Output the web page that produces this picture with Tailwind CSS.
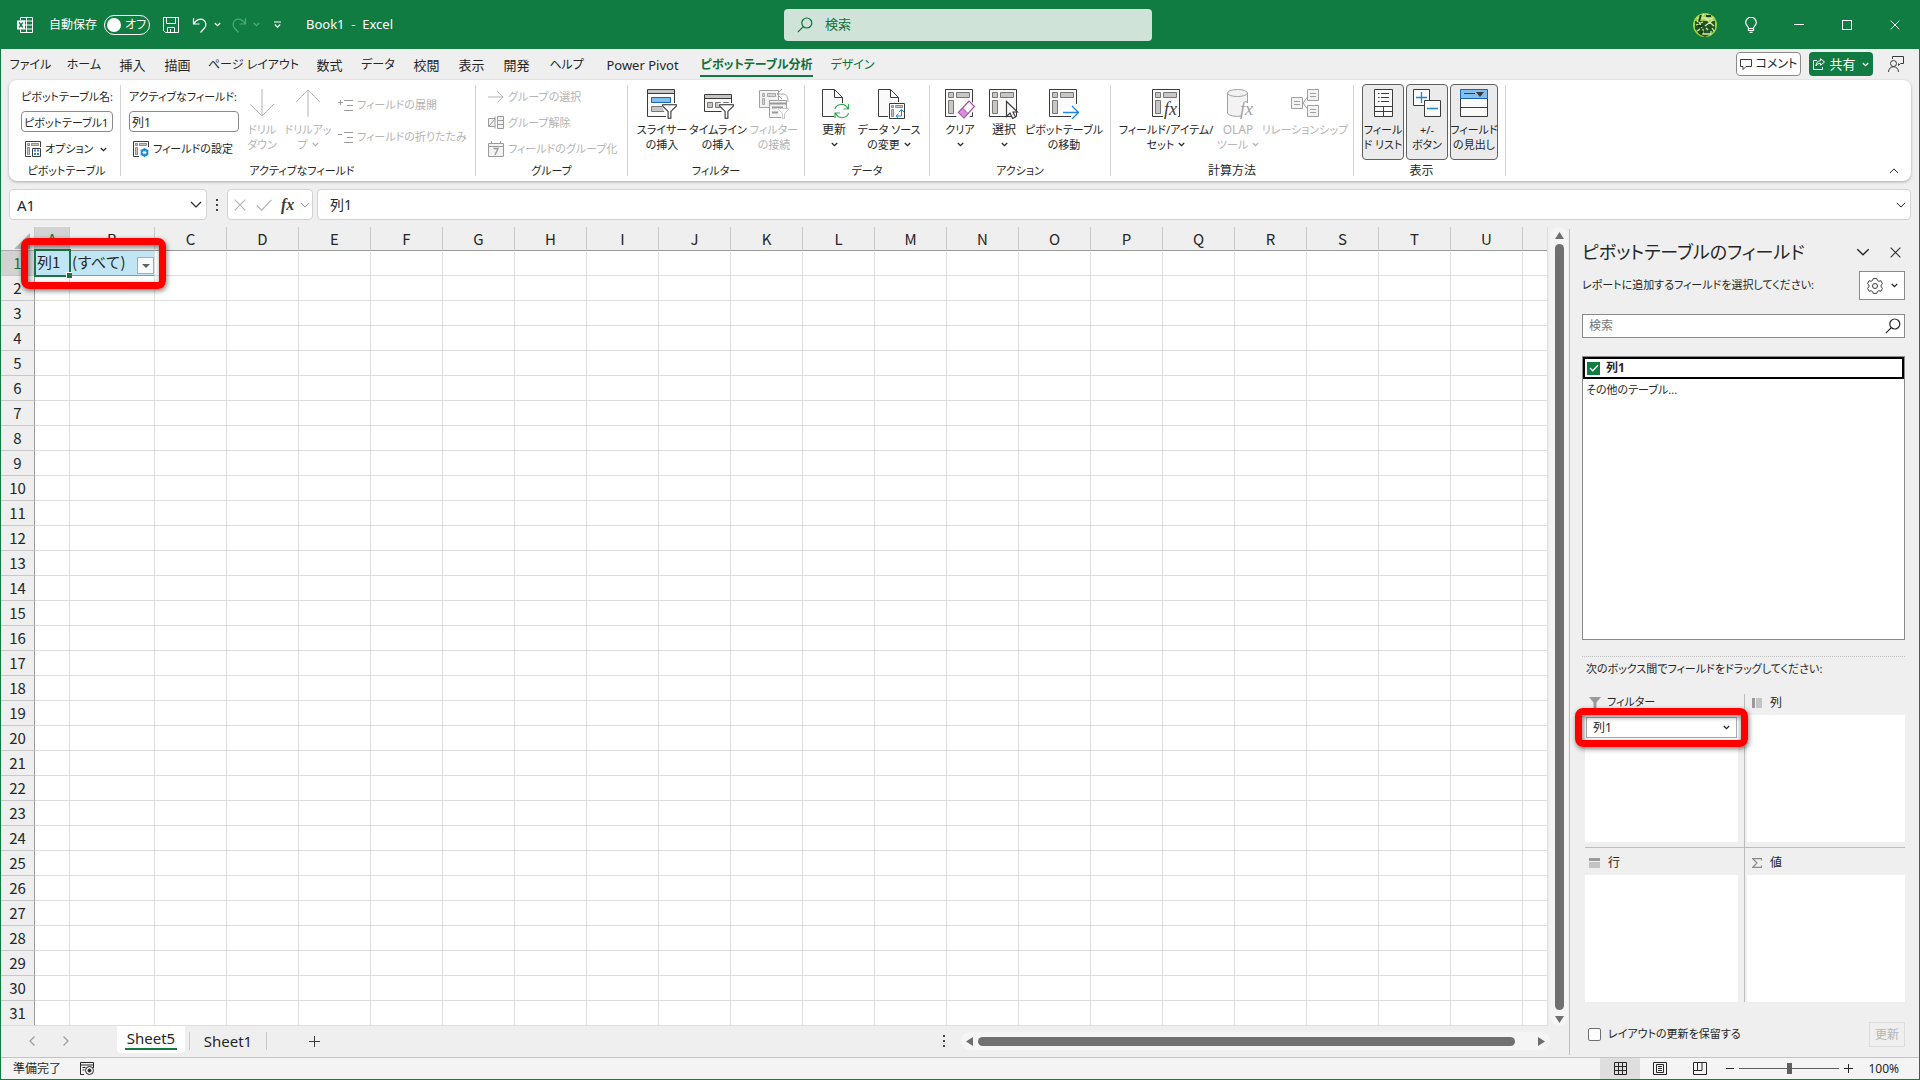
<!DOCTYPE html>
<html lang="ja">
<head>
    <meta charset="UTF-8">
    <meta name="viewport" content="width=device-width, initial-scale=1.0">
    <title>Book1 - Excel</title>
    <script src="https://cdn.jsdelivr.net/npm/@tailwindcss/browser@4"></script>
</head>
<body class="h-screen overflow-hidden bg-[#efefef] font-['Noto_Sans','Noto_Sans_CJK_JP',sans-serif] text-xs text-[#262626] whitespace-nowrap [font-feature-settings:'palt']">

    <!-- shared icons -->
    <svg class="hidden">
        <symbol id="chev" viewBox="0 0 7 5"><path d="M.8 1l2.700 2.600L6.200 1" fill="none" stroke="currentColor" stroke-width="1.300"/></symbol>
        <symbol id="chevL" viewBox="0 0 12 7"><path d="M1 1l5 5 5-5" fill="none" stroke="currentColor" stroke-width="1.200"/></symbol>
        <symbol id="pivot" viewBox="0 0 28 28">
            <path d="M.5.5h27v27H.5z" fill="#fafafa" stroke="#3b3b3b"/>
            <path d="M3.500 3.500h5v5h-5zM11.500 3.500h13v5h-13zM3.500 11.500h5v13h-5z" fill="#c8c6c4" stroke="#797774"/>
        </symbol>
        <symbol id="pivotS" viewBox="0 0 16 16">
            <path d="M15.500 6V.5H.5v15H6" fill="none" stroke="#3b3b3b"/>
            <path d="M2.500 2.500h2v2h-2zM6.500 2.500h7v2h-7zM2.500 6.500h2v7h-2z" fill="#c8c6c4" stroke="#797774" stroke-width=".8"/>
        </symbol>
        <symbol id="funnel" viewBox="0 0 16 16"><path d="M.7.7h14.600v1.600L9.500 8v7.300h-3V8L.7 2.300z" fill="#fff" stroke="currentColor" stroke-width="1.100"/></symbol>
        <symbol id="lens" viewBox="0 0 16 16"><path d="M6.300 9.700L.8 15.200" stroke="currentColor" stroke-width="1.200"/><circle cx="9.800" cy="6" r="5" fill="none" stroke="currentColor" stroke-width="1.200"/></symbol>
        <symbol id="cross" viewBox="0 0 12 12"><path d="M.7.7l10.600 10.600M11.300.7L.7 11.300" stroke="currentColor" stroke-width="1.100"/></symbol>
    </svg>

    <div class="flex h-full flex-col border-x border-b border-[#107c41]">

        <!-- title bar -->
        <header class="grid h-[49px] shrink-0 grid-cols-[1fr_368px_1fr] items-center bg-[#107c41] pl-4 text-white">
            <div class="flex items-center">
                <svg class="h-4 w-4" viewBox="0 0 16 16" fill="none" stroke="#fff"><path d="M3.500 3.500V.5h12v15h-12v-3M3.500 4h12M8 8h7.500M8 12h7.500M9.500.5v15"/><path d="M0 3.500h8v9H0z" fill="#fff" stroke="none"/><path d="M2.200 5.500l3.600 5M5.800 5.500l-3.600 5" stroke="#107c41" stroke-width="1.400"/></svg>
                <span class="ml-4 w-12">自動保存</span>
                <button class="ml-[7px] flex h-5 w-[46px] items-center rounded-full border border-white pl-[2px]"><span class="h-[14px] w-[14px] rounded-full bg-white"></span><span class="ml-1 text-xs">オフ</span></button>
                <button class="ml-[13px]"><svg class="h-4 w-4" viewBox="0 0 16 16" fill="none" stroke="#fff"><path d="M.5.5h15v15H2.500l-2-2zM3.500.5v6h9v-6M4.500 15.500v-5h7v5M7.500 15v-3"/></svg></button>
                <button class="ml-[13px] flex items-center gap-[6px]"><svg class="h-4 w-4" viewBox="0 0 16 16" fill="none" stroke="#fff" stroke-width="1.200"><path d="M1.500 1v6h6M1.800 6.600C4 3 8 .8 11.500 3c3 2 3 6 1 8L8.500 15.500"/></svg><svg class="h-[5px] w-[7px]"><use href="#chev"/></svg></button>
                <button class="ml-[10px] flex items-center gap-[6px] text-[#57a67b]"><svg class="h-4 w-4" viewBox="0 0 16 16" fill="none" stroke="currentColor" stroke-width="1.200"><path d="M14.500 1v6h-6M14.200 6.600C12 3 8 .8 4.500 3c-3 2-3 6-1 8l4 4.500"/></svg><svg class="h-[5px] w-[7px]"><use href="#chev"/></svg></button>
                <button class="ml-[14px]"><svg class="h-2 w-[7px]" viewBox="0 0 7 8" fill="none" stroke="#fff" stroke-width="1.200"><path d="M0 1h7M.8 3.500l2.700 2.700 2.700-2.700"/></svg></button>
                <span class="ml-[25px] whitespace-pre text-[13px]">Book1  -  Excel</span>
            </div>
            <label class="flex h-8 items-center rounded-sm bg-[#cfe3d8] pl-[13px] text-[#0f703b]">
                <svg class="h-4 w-4"><use href="#lens"/></svg>
                <input type="text" placeholder="検索" class="ml-3 w-72 text-[13px] outline-none placeholder:text-[#0f703b]">
            </label>
            <div class="flex h-full items-center justify-end">
                <button class="flex w-11 justify-center"><svg class="h-6 w-6" viewBox="0 0 24 24"><circle cx="12" cy="12" r="12" fill="#a3d13a"/><path d="M2 8h20v8l-4 5-6 3-6-3-4-5z" fill="#1f5420"/><path d="M11 1L4 9M4 5h8M3 12l7-3M6 9l3 6M15 1l-3 5M12 6h6l3-2M14 7l7 6M20 7l-8 6M4 18l3-2M10 16v5h8v-3M13 15l2 2M19 15l2 3" fill="none" stroke="#d7e8b6" stroke-width="1.300"/><path d="M8 2l-2 6M13 3h5M5 13h5M7 21l3-3" stroke="#183c1a" stroke-width="2"/></svg></button>
                <button class="flex w-12 justify-center"><svg class="h-4 w-3" viewBox="0 0 12 16" fill="none" stroke="#fff" stroke-width="1.200"><path d="M3.500 11.500C3.500 9 .7 8.500.7 5.500a5.300 5.300 0 0110.600 0c0 3-2.800 3.500-2.800 6zM3.500 11.500v2h5v-2M4.500 15.400h3"/></svg></button>
                <button class="flex w-12 justify-center"><span class="h-px w-[10px] bg-white"></span></button>
                <button class="flex w-12 justify-center"><span class="h-[10px] w-[10px] border border-white"></span></button>
                <button class="flex w-12 justify-center"><svg class="h-[10px] w-[10px]"><use href="#cross"/></svg></button>
            </div>
        </header>

        <!-- ribbon tabs -->
        <nav class="flex h-[31px] shrink-0 items-start pl-[2px] pr-[15px] pt-2 text-center text-xs leading-4">
            <a href="#" class="w-[55px]">ファイル</a>
            <a href="#" class="w-[52px]">ホーム</a>
            <a href="#" class="w-[45px] text-[13px] leading-4">挿入</a>
            <a href="#" class="w-[45px] text-[13px] leading-4">描画</a>
            <a href="#" class="w-[107px]">ページ レイアウト</a>
            <a href="#" class="w-[45px] text-[13px] leading-4">数式</a>
            <a href="#" class="w-[52px]">データ</a>
            <a href="#" class="w-[45px] text-[13px] leading-4">校閲</a>
            <a href="#" class="w-[45px] text-[13px] leading-4">表示</a>
            <a href="#" class="w-[45px] text-[13px] leading-4">開発</a>
            <a href="#" class="w-[55px]">ヘルプ</a>
            <a href="#" class="w-[97px] text-[13px] leading-4">Power Pivot</a>
            <a href="#" class="flex w-[131px] justify-center font-bold text-[#0f703b]"><span class="border-b-2 border-[#107c41] pb-[2px]">ピボットテーブル分析</span></a>
            <a href="#" class="w-[61px] text-[#0f703b]">デザイン</a>
            <div class="-mt-[5px] ml-auto flex items-center gap-2">
                <button class="flex h-6 w-[65px] items-center justify-center gap-1 rounded border border-[#8a8a8a] bg-white"><svg class="h-[11px] w-3" viewBox="0 0 12 11" fill="none" stroke="#3b3b3b"><path d="M.5.5h11v7H6l-3 3v-3H.5z"/></svg>コメント</button>
                <button class="flex h-6 w-16 items-center justify-center gap-1 rounded bg-[#107c41] text-[13px] text-white"><svg class="h-3 w-3" viewBox="0 0 12 12" fill="none" stroke="#fff"><path d="M4 2.500H.5v9h9V9M7.500.7l4 3.300-4 3.300V5.300C5.500 5.300 4 6 3 8c0-3 1.500-5 4.500-5.300z"/></svg>共有<svg class="ml-[2px] h-[5px] w-[7px]"><use href="#chev"/></svg></button>
                <button class="ml-[7px]"><svg class="h-4 w-4" viewBox="0 0 16 16" fill="none" stroke="#3b3b3b"><circle cx="5.500" cy="7.500" r="3"/><path d="M.5 16c0-7 10-7 10 0M4.500 3V.5h11v7h-3l-2 2v-2"/></svg></button>
            </div>
        </nav>

        <!-- ribbon -->
        <section class="mx-2 flex h-[101px] shrink-0 rounded-lg bg-white py-[5px] shadow-[0_1px_3px_rgba(0,0,0,0.3)]">

            <div class="flex w-28 flex-col border-r border-[#d2d2d2] pl-3 pr-2">
                <label for="ptName" class="mt-1 leading-4 text-[11px]">ピボットテーブル名:</label>
                <input id="ptName" type="text" value="ピボットテーブル1" class="mt-[6px] h-[21px] w-[92px] rounded border border-[#8a8a8a] pl-[2px] text-[11px]">
                <button class="mt-2 flex h-[18px] items-center pl-1 text-[11px]"><svg class="h-4 w-4" viewBox="0 0 16 16"><use href="#pivotS"/><path d="M7.500 7.500h8v8h-8z" fill="#fff" stroke="#3b3b3b"/><path d="M9 9.500h2M9 13h2M12 9.500h2M12 13h2" stroke="#1e88d2" stroke-width="1.800"/></svg><span class="ml-1">オプション</span><svg class="ml-auto mr-[5px] h-[5px] w-[7px]"><use href="#chev"/></svg></button>
                <p class="-mb-[2px] mt-auto text-center text-[11px] leading-[14px]">ピボットテーブル</p>
            </div>

            <div class="flex w-[355px] flex-col border-r border-[#d2d2d2] pl-2">
                <div class="flex">
                    <div class="flex w-[110px] flex-col">
                        <label for="fieldName" class="mt-1 leading-4 text-[11px]">アクティブなフィールド:</label>
                        <input id="fieldName" type="text" value="列1" class="mt-[6px] h-[21px] w-[110px] rounded border border-[#8a8a8a] pl-[2px]">
                        <button class="mt-2 flex h-[18px] items-center pl-1 text-[11px]"><svg class="h-4 w-4" viewBox="0 0 16 16"><use href="#pivotS"/><circle cx="11.500" cy="11.500" r="3" fill="#fff" stroke="#1e88d2" stroke-width="1.800"/><path d="M11.500 7v9M7.600 9.300l7.800 4.400M7.600 13.700l7.800-4.400" stroke="#1e88d2"/><circle cx="11.500" cy="11.500" r="1.300" fill="#fff"/></svg><span class="ml-1">フィールドの設定</span></button>
                    </div>
                    <button disabled class="flex w-[46px] flex-col items-center pt-1 text-[11px] leading-[15px] text-[#b4b4b4]"><svg class="mb-[3px] h-[30px] w-[26px]" viewBox="0 0 26 30" fill="none" stroke="currentColor"><path d="M13 0v27M1 15l12 12 12-12"/></svg>ドリル<br>ダウン</button>
                    <button disabled class="flex w-[46px] flex-col items-center pt-1 text-[11px] leading-[15px] text-[#b4b4b4]"><svg class="mb-[3px] h-[30px] w-[26px]" viewBox="0 0 26 30" fill="none" stroke="currentColor"><path d="M13 28V1M1 13L13 1l12 12"/></svg><span>ドリルアッ</span><span class="flex items-center gap-1">プ<svg class="h-[5px] w-[7px]"><use href="#chev"/></svg></span></button>
                    <div class="flex flex-col gap-4 pl-[7px] pt-3 text-[11px] text-[#b4b4b4]">
                        <button disabled class="flex h-4 items-center gap-1"><svg class="h-3 w-[15px]" viewBox="0 0 15 12" fill="none" stroke="#9a9a9a"><path d="M0 3.500h5M2.500 1v5M6 1.500h9M9 6.500h6M6 11.500h9"/></svg>フィールドの展開</button>
                        <button disabled class="flex h-4 items-center gap-1"><svg class="h-3 w-[15px]" viewBox="0 0 15 12" fill="none" stroke="#9a9a9a"><path d="M0 3.500h4M6 1.500h9M9 6.500h6M6 11.500h9"/></svg>フィールドの折りたたみ</button>
                    </div>
                </div>
                <p class="-mb-[2px] mt-auto text-center text-[11px] leading-[14px]">アクティブなフィールド</p>
            </div>

            <div class="flex w-[152px] flex-col border-r border-[#d2d2d2] pl-3">
                <div class="flex flex-col gap-[10px] pt-1 text-[11px] text-[#b4b4b4]">
                    <button disabled class="flex h-4 items-center gap-1"><svg class="h-4 w-4" viewBox="0 0 16 16" fill="none" stroke="#b4b4b4"><path d="M0 8h15M9.500 2.500L15 8l-5.500 5.500"/></svg>グループの選択</button>
                    <button disabled class="flex h-4 items-center gap-1"><svg class="h-4 w-4" viewBox="0 0 16 16" fill="#f3f3f3" stroke="#9a9a9a"><path d="M7 3.500H.5v8H7M1 11l6-7M9.500 1.500h6v12h-6zM9.500 5.500h6M9.500 9.500h6M7 1.500v12"/></svg>グループ解除</button>
                    <button disabled class="flex h-4 items-center gap-1"><svg class="h-4 w-4" viewBox="0 0 16 16" fill="#f3f3f3" stroke="#9a9a9a"><path d="M.5 2.500h15v13H.5zM.5 5.500h15M3.500 0v3M12.500 0v3"/><path d="M5.500 7.500h4.500l-3 6.500" fill="none" stroke-width="1.400"/></svg>フィールドのグループ化</button>
                </div>
                <p class="-mb-[2px] mt-auto pr-3 text-center text-[11px] leading-[14px]">グループ</p>
            </div>

            <div class="flex w-[177px] flex-col border-r border-[#d2d2d2]">
                <div class="flex justify-center pt-1 pl-1 text-[11px] leading-[15px]">
                    <button class="flex w-[54px] flex-col items-center"><svg class="mb-[3px] h-[30px] w-[30px]" viewBox="0 0 30 30"><path d="M.5.5h27v27H.5z" fill="#fafafa" stroke="#3b3b3b"/><path d="M1 1h26v3H1z" fill="#c8c6c4"/><path d="M.5 4.500h27" stroke="#3b3b3b"/><path d="M4.500 8.500h19v5h-19z" fill="#83beec" stroke="#1565b0"/><path d="M4.500 17.500h13v5h-13z" fill="#c8c6c4" stroke="#797774"/><path d="M14 14h16v16h-10z" fill="#fff"/><use href="#funnel" x="15" y="15" width="15" height="15"/></svg>スライサー<br>の挿入</button>
                    <button class="flex w-[58px] flex-col items-center"><svg class="mb-[3px] ml-[2px] h-[30px] w-[30px]" viewBox="0 0 30 30"><path d="M.5 5.500h27v17H.5z" fill="#fafafa" stroke="#3b3b3b"/><path d="M1 6h26v3H1z" fill="#c8c6c4"/><path d="M.5 9.500h27" stroke="#3b3b3b"/><path d="M3.500 13.500h5v5h-5zM11.500 13.500h5v5h-5zM19.500 13.500h5v5h-5z" fill="#c8c6c4" stroke="#797774"/><path d="M14 14h15v14h-9z" fill="#fff"/><use href="#funnel" x="15" y="15" width="15" height="15"/></svg>タイムライン<br>の挿入</button>
                    <button disabled class="flex w-[54px] flex-col items-center text-[#b4b4b4]"><svg class="mb-[3px] h-[30px] w-[30px]" viewBox="0 0 30 30"><path d="M.5 1.500h19v17H.5z" fill="#f3f3f3" stroke="#a0a0a0"/><path d="M3.500 4.500h2v3h-2zM8.500 4.500h8v3h-8zM3.500 9.500h2v6h-2z" fill="#d5d5d5" stroke="#a8a8a8"/><path d="M10.500 11.500h17v17h-17z" fill="#f3f3f3" stroke="#a0a0a0"/><path d="M10.500 14.500h17M13 18.500h11M13 23.500h6" stroke="#9a9a9a" stroke-width="2"/><path d="M18 19h12v11h-7z" fill="#fff"/><use href="#funnel" x="19" y="19" width="11" height="11"/><path d="M23 0l-5 5 5 5M18 5h6c3 0 5 2 5 8" fill="none" stroke="#a8a8a8"/></svg>フィルター<br>の接続</button>
                </div>
                <p class="-mb-[2px] mt-auto text-center text-[11px] leading-[14px]">フィルター</p>
            </div>

            <div class="flex w-[125px] flex-col border-r border-[#d2d2d2]">
                <div class="flex pl-[10px] pt-1 text-[11px] leading-[15px]">
                    <button class="flex w-[38px] flex-col items-center"><svg class="mb-[3px] ml-1 h-[30px] w-7" viewBox="0 0 28 30" fill="none"><path d="M12 27.500H.5V.5h12l8 8V14" fill="#fafafa" stroke="#3b3b3b"/><path d="M12.500.5v8h8" stroke="#3b3b3b"/><path d="M13 20c1-5 10-7 13 0M26.500 15v5h-5M26.500 24c-1 5-10 7-13 0M13 29v-5h5" stroke="#3aa655" stroke-width="1.200"/></svg><span class="text-xs leading-[15px]">更新</span><svg class="mt-[5px] h-[5px] w-[7px]"><use href="#chev"/></svg></button>
                    <button class="flex w-[72px] flex-col items-center"><svg class="mb-[3px] ml-[6px] h-[30px] w-7" viewBox="0 0 28 30" fill="none"><path d="M10 27.500H.5V.5h12l8 8V13" fill="#fafafa" stroke="#3b3b3b"/><path d="M12.500.5v8h8" stroke="#3b3b3b"/><path d="M11.500 14.500h15v15h-15z" fill="#fff" stroke="#3b3b3b"/><path d="M13.500 16.500h2v2h-2zM17.500 16.500h7v2h-7zM13.500 20.500h2v7h-2z" fill="#c8c6c4" stroke="#797774" stroke-width=".8"/><path d="M18.500 27h5v-6M21 23l2.500-2.500L26 23M20.500 24.500L18 27l2.500 2.500" stroke="#1e88d2"/></svg><span>データ ソース</span><span class="flex items-center gap-1">の変更<svg class="h-[5px] w-[7px]"><use href="#chev"/></svg></span></button>
                </div>
                <p class="-mb-[2px] mt-auto text-center text-[11px] leading-[14px]">データ</p>
            </div>

            <div class="flex w-[181px] flex-col border-r border-[#d2d2d2]">
                <div class="flex pl-2 pt-1 text-[11px] leading-[15px]">
                    <button class="flex w-[44px] flex-col items-center"><svg class="mb-[3px] h-[30px] w-[30px]" viewBox="0 0 30 30"><use href="#pivot" width="28" height="28"/><path d="M11 28l14-18 6 8-8 12H11z" fill="#fff"/><path d="M13.500 23.500L24 12l5.500 5.500L19 29z" fill="#fff" stroke="#a349a4" stroke-width="1.200"/><path d="M13.500 23.500l4-4.500 5.500 5.500-4 4.500z" fill="#d88fd9" stroke="#a349a4"/></svg>クリア<svg class="mt-[5px] h-[5px] w-[7px]"><use href="#chev"/></svg></button>
                    <button class="flex w-[44px] flex-col items-center"><svg class="mb-[3px] h-[30px] w-[30px]" viewBox="0 0 30 30"><use href="#pivot" width="28" height="28"/><path d="M17.500 12.500v15l3.500-3.500 2.500 5.500 3-1.500-2.500-5h4.500z" fill="#fff" stroke="#3b3b3b" stroke-width="1.200"/></svg><span class="text-xs leading-[15px]">選択</span><svg class="mt-[5px] h-[5px] w-[7px]"><use href="#chev"/></svg></button>
                    <button class="flex w-[76px] flex-col items-center"><svg class="mb-[3px] h-[30px] w-[30px]" viewBox="0 0 30 30" fill="none"><use href="#pivot" width="28" height="28"/><path d="M13 19h9v-4h8v15h-8v-4h-9z" fill="#fff"/><path d="M14 23.500h15.500M23 17l6.500 6.500L23 30" stroke="#1e88d2" stroke-width="1.300"/></svg>ピボットテーブル<br>の移動</button>
                </div>
                <p class="-mb-[2px] mt-auto text-center text-[11px] leading-[14px]">アクション</p>
            </div>

            <div class="flex w-[243px] flex-col border-r border-[#d2d2d2]">
                <div class="flex pl-2 pt-1 text-[11px] leading-[15px]">
                    <button class="flex w-[94px] flex-col items-center"><svg class="mb-[3px] h-[30px] w-7" viewBox="0 0 28 30"><use href="#pivot" width="28" height="28"/><path d="M12 13h14v17H11z" fill="#fff"/><text x="12" y="26" font-family="Liberation Serif" font-style="italic" font-size="18" fill="#3b3b3b">fx</text></svg><span>フィールド/アイテム/</span><span class="flex items-center gap-1">セット<svg class="h-[5px] w-[7px]"><use href="#chev"/></svg></span></button>
                    <button disabled class="flex w-[50px] flex-col items-center text-[#b4b4b4]"><svg class="mb-[3px] ml-[6px] h-[30px] w-7" viewBox="0 0 28 30"><path d="M.5 4v20c0 4.500 20 4.500 20 0V4" fill="#f3f3f3" stroke="#a0a0a0"/><ellipse cx="10.500" cy="4" rx="10" ry="3.500" fill="#f3f3f3" stroke="#a0a0a0"/><path d="M14 14h10v14H14z" fill="#fff"/><text x="13" y="26" font-family="Liberation Serif" font-style="italic" font-size="18" fill="#a0a0a0">fx</text></svg><span class="text-xs leading-[15px]">OLAP</span><span class="flex items-center gap-1">ツール<svg class="h-[5px] w-[7px]"><use href="#chev"/></svg></span></button>
                    <button disabled class="flex w-[84px] flex-col items-center text-[#b4b4b4]"><svg class="mb-[3px] h-[30px] w-7" viewBox="0 0 28 30" fill="#f3f3f3" stroke="#a0a0a0"><path d="M.5 8.500h11v11H.5zM16.500.5h11v11h-11zM16.500 16.500h11v11h-11zM12 14l4.500-6M12 14l4.500 6M3 12.500h6M3 15.500h6M19 4.500h6M19 7.500h6M19 20.500h6M19 23.500h6"/></svg>リレーションシップ</button>
                </div>
                <p class="-mb-[2px] mt-auto text-center text-xs leading-[14px]">計算方法</p>
            </div>

            <div class="flex w-[152px] flex-col border-r border-[#d2d2d2]">
                <div class="-mt-px flex gap-[2px] pl-2 text-[11px] leading-[15px]">
                    <button class="flex h-[76px] w-[42px] flex-col items-center rounded border border-[#616161] bg-[#ebebeb] pt-1"><svg class="mb-[3px] h-[30px] w-[19px]" viewBox="0 0 19 30" fill="#fafafa" stroke="#3b3b3b"><path d="M.5.5h18v27H.5z"/><path d="M.5 17.500h18M.5 22.500h18M9.500 17.500v10M4 4.500h1.500M7 4.500h8M4 8.500h1.500M7 8.500h8M4 12.500h1.500M7 12.500h8"/></svg>フィール<br>ド リスト</button>
                    <button class="flex h-[76px] w-[42px] flex-col items-center rounded border border-[#616161] bg-[#ebebeb] pt-1"><svg class="mb-[3px] h-[30px] w-7" viewBox="0 0 28 30" fill="#fafafa" stroke="#3b3b3b"><path d="M.5.5h16v16H.5z"/><path d="M11.500 11.500h16v16h-16z"/><path d="M3 8.500h11M8.500 3v11M14 19.500h11" stroke="#1e88d2" stroke-width="1.300"/></svg>+/-<br>ボタン</button>
                    <button class="flex h-[76px] w-12 flex-col items-center rounded border border-[#616161] bg-[#ebebeb] pt-1"><svg class="mb-[3px] h-[30px] w-7" viewBox="0 0 28 30" fill="#fafafa" stroke="#3b3b3b"><path d="M.5 9.500h27v18H.5zM.5 18.500h27"/><path d="M.5.5h27v9H.5z" fill="#83beec" stroke="#1565b0"/><path d="M4 4.500h11"/><path d="M16 3h8l-4 5z" fill="#3b3b3b" stroke="none"/></svg>フィールド<br>の見出し</button>
                </div>
                <p class="-mb-[2px] mt-auto pr-4 text-center text-xs leading-[14px]">表示</p>
            </div>

            <button class="mb-[2px] ml-auto mr-3 self-end"><svg class="h-[6px] w-[10px] rotate-180"><use href="#chevL"/></svg></button>
        </section>

        <!-- formula bar -->
        <div class="mx-2 mb-[7px] mt-2 flex h-[31px] shrink-0 text-sm">
            <div class="flex w-[198px] items-center rounded border border-[#d2d2d2] bg-white pl-[7px] pr-1">
                <input type="text" value="A1" aria-label="名前ボックス" class="min-w-0 flex-1 pt-[2px] text-[15px] outline-none">
                <svg class="h-[7px] w-3"><use href="#chevL"/></svg>
            </div>
            <div class="flex w-5 flex-col items-center justify-center gap-[3px]"><i class="h-[2px] w-[2px] bg-[#444]"></i><i class="h-[2px] w-[2px] bg-[#444]"></i><i class="h-[2px] w-[2px] bg-[#444]"></i></div>
            <div class="flex w-[86px] items-center rounded border border-[#d2d2d2] bg-white pl-[6px] pr-[2px] text-[#b4b4b4]">
                <button><svg class="h-3 w-3"><use href="#cross"/></svg></button>
                <button class="ml-[10px]"><svg class="h-3 w-4" viewBox="0 0 16 12" fill="none" stroke="currentColor" stroke-width="1.200"><path d="M.7 6.500l5 4.700L15.500.8"/></svg></button>
                <button class="ml-[9px] font-['Liberation_Serif',serif] text-base leading-none font-bold italic text-[#3b3b3b]">fx</button>
                <svg class="ml-auto h-[6px] w-[10px] text-[#8a8a8a]"><use href="#chevL"/></svg>
            </div>
            <div class="ml-1 flex flex-1 items-center rounded border border-[#d2d2d2] bg-white pl-3 pr-1">
                <input type="text" value="列1" aria-label="数式バー" class="min-w-0 flex-1 text-sm outline-none">
                <svg class="h-[6px] w-[10px]"><use href="#chevL"/></svg>
            </div>
        </div>

        <div class="flex min-h-0 flex-1">
            <div class="flex min-w-0 flex-1 flex-col">
                <div class="flex min-h-0 flex-1">

                    <!-- sheet -->
                    <div class="relative min-w-0 flex-1 overflow-hidden border-b border-r border-[#dedede]">
                        <table class="w-full table-fixed border-separate border-spacing-0 font-['Noto_Sans_CJK_JP',sans-serif] text-[15px] leading-none [font-feature-settings:normal]">
                            <thead><tr id="cols" class="h-6"></tr></thead>
                            <tbody id="rows"></tbody>
                        </table>
                        <div class="pointer-events-none absolute left-[33px] top-[22px] h-[28px] w-[37px] border-2 border-[#1a7343]"><i class="absolute -bottom-[3px] -right-[3px] h-[6px] w-[6px] border-l border-t border-white bg-[#1a7343]"></i></div>
                        <button class="absolute left-[136px] top-[30px] flex h-[17px] w-[17px] items-center justify-center border border-[#ababab] bg-[#f8f9fb]"><svg class="h-1 w-2" viewBox="0 0 8 4"><path d="M0 0h8L4 4z" fill="#606060"/></svg></button>
                        <div class="pointer-events-none absolute left-5 top-[11px] h-[51px] w-[145px] rounded-lg border-[7px] border-[#f00] shadow-[1px_2px_5px_rgba(0,0,0,0.5),inset_1px_2px_5px_rgba(0,0,0,0.5)]"></div>
                    </div>

                    <div class="ml-[2px] mr-px flex w-[18px] flex-col items-center rounded-full bg-[#f5f5f5] pb-[3px] pt-[5px]">
                        <svg class="h-[7px] w-[9px]" viewBox="0 0 9 7"><path d="M4.500 0L9 7H0z" fill="#6e6e6e"/></svg>
                        <div class="mb-[6px] mt-[5px] w-[9px] flex-1 rounded-full bg-[#707070]"></div>
                        <svg class="h-[7px] w-[9px]" viewBox="0 0 9 7"><path d="M4.500 7L9 0H0z" fill="#6e6e6e"/></svg>
                    </div>
                </div>

                <!-- sheet tabs -->
                <div class="flex h-[31px] shrink-0 items-center pb-px font-['Noto_Sans',sans-serif] text-[15px]">
                    <button class="ml-7 text-[#9a9a9a]"><svg class="h-[10px] w-[6px]" viewBox="0 0 6 10"><path d="M5.500.5L1 5l4.500 4.500" fill="none" stroke="currentColor" stroke-width="1.200"/></svg></button>
                    <button class="ml-7 text-[#9a9a9a]"><svg class="h-[10px] w-[6px]" viewBox="0 0 6 10"><path d="M.5.5L5 5 .5 9.500" fill="none" stroke="currentColor" stroke-width="1.200"/></svg></button>
                    <button class="-mt-px ml-12 flex h-[28px] w-[68px] justify-center self-start rounded-b bg-white pt-[3px]"><span class="h-[22px] border-b-2 border-[#107c41] px-[2px] leading-5">Sheet5</span></button>
                    <button class="ml-1 h-[18px] w-[78px] border-x border-[#c8c8c8] leading-[18px]">Sheet1</button>
                    <button class="ml-[42px]"><svg class="h-[11px] w-[11px]" viewBox="0 0 11 11"><path d="M5.500 0v11M0 5.500h11" stroke="#3b3b3b"/></svg></button>
                    <div class="ml-auto mr-4 flex flex-col gap-[3px]"><i class="h-[2px] w-[2px] bg-[#444]"></i><i class="h-[2px] w-[2px] bg-[#444]"></i><i class="h-[2px] w-[2px] bg-[#444]"></i></div>
                    <div class="mr-[19px] flex h-[18px] w-[589px] items-center rounded-full bg-[#f5f5f5] px-[5px]">
                        <svg class="h-[9px] w-[7px]" viewBox="0 0 7 9"><path d="M0 4.500L7 0v9z" fill="#6e6e6e"/></svg>
                        <div class="ml-[5px] mr-[23px] h-[9px] flex-1 rounded-full bg-[#707070]"></div>
                        <svg class="h-[9px] w-[7px]" viewBox="0 0 7 9"><path d="M7 4.500L0 0v9z" fill="#6e6e6e"/></svg>
                    </div>
                </div>
            </div>

            <!-- field list pane -->
            <aside class="mb-[2px] mt-[2px] flex w-[350px] shrink-0 flex-col border-l border-[#bdbdbd] pl-3 pr-[14px] text-[11px]">
                <div class="mt-[7px] flex h-8 items-center">
                    <h2 class="text-lg leading-8">ピボットテーブルのフィールド</h2>
                    <button class="ml-auto"><svg class="h-2 w-[14px]"><use href="#chevL"/></svg></button>
                    <button class="ml-5 mr-1"><svg class="h-[11px] w-[11px]"><use href="#cross"/></svg></button>
                </div>
                <div class="mt-[3px] flex items-center justify-between">
                    <p>レポートに追加するフィールドを選択してください:</p>
                    <button class="flex h-[29px] w-[46px] items-center justify-center gap-2 border border-[#8a8a8a] bg-white"><svg class="h-4 w-4" viewBox="0 0 16 16" fill="none" stroke="#3b3b3b"><path d="M5.600 2.400L6.200.6h3.600l.6 1.800 1.500.9 2-.6 1.600 3-1.400 1.400v1.800l1.400 1.400-1.600 3-2-.6-1.500.9-.6 1.800H6.200l-.6-1.800-1.500-.9-2 .6-1.600-3 1.400-1.400V7.100L.5 5.700l1.600-3 2 .6z"/><circle cx="8" cy="8" r="2.500"/></svg><svg class="h-[5px] w-[7px]"><use href="#chev"/></svg></button>
                </div>
                <label class="mt-[14px] flex h-6 shrink-0 items-center border border-[#8a8a8a] bg-white pl-[6px] pr-[3px]">
                    <input type="text" placeholder="検索" class="min-w-0 flex-1 text-xs outline-none placeholder:text-[#767676]">
                    <svg class="h-4 w-4"><use href="#lens"/></svg>
                </label>
                <div class="mt-[18px] flex-1 border border-[#8a8a8a] bg-white">
                    <label class="relative flex h-[22px] items-center border-2 border-black pl-[2px] text-xs font-bold"><input type="checkbox" checked class="h-[13px] w-[13px] appearance-none bg-[#107c41]"><svg class="absolute left-[4px] h-2 w-[10px]" viewBox="0 0 10 8"><path d="M1 4l2.700 2.700L9 1.300" fill="none" stroke="#fff" stroke-width="1.400"/></svg><span class="ml-[6px]">列1</span></label>
                    <a href="#" class="block pl-[3px] pt-[3px] leading-4">その他のテーブル...</a>
                </div>
                <div class="mt-4 border-t border-dotted border-[#bdbdbd] pl-1 pt-1 leading-4">次のボックス間でフィールドをドラッグしてください:</div>

                <div class="mt-[17px] grid grid-cols-[160px_1fr] pl-[3px] text-xs">
                    <div class="relative border-b border-r border-[#bdbdbd] pb-[5px] pr-[6px]">
                        <h3 class="flex h-[21px] items-center pl-1 pb-1"><svg class="h-3 w-3" viewBox="0 0 12 12"><path d="M0 0h12L7.500 5.500V12h-3V5.500z" fill="#9a9a9a"/></svg><span class="ml-[6px] text-[11px]">フィルター</span></h3>
                        <div class="h-[127px] bg-white p-px pt-[2px]">
                            <button class="flex h-[21px] w-full items-center justify-between border border-[#ababab] pl-[6px] pr-[6px]">列1<svg class="h-[5px] w-[7px]"><use href="#chev"/></svg></button>
                        </div>
                        <div class="pointer-events-none absolute -left-[10px] top-[14px] h-[39px] w-[173px] rounded-lg border-[7px] border-[#f00] shadow-[1px_2px_5px_rgba(0,0,0,0.5),inset_1px_2px_5px_rgba(0,0,0,0.5)]"></div>
                    </div>
                    <div class="border-b border-[#bdbdbd] pl-[2px]">
                        <h3 class="flex h-[21px] items-center pl-[5px] pb-1"><svg class="h-[10px] w-[10px]" viewBox="0 0 10 10"><path d="M0 0h3v10H0zM4.500 0h1v10h-1zM6.500 0h1v10h-1zM8.500 0h1v10h-1z" fill="#9a9a9a"/></svg><span class="ml-2">列</span></h3>
                        <div class="h-[127px] bg-white"></div>
                    </div>
                    <div class="border-r border-[#bdbdbd] pr-[6px] pt-[6px]">
                        <h3 class="flex h-[21px] items-center pl-1 pb-1"><svg class="h-[10px] w-[11px]" viewBox="0 0 11 10"><path d="M0 0h11v3H0zM0 4.500h11v1H0zM0 6.500h11v1H0zM0 8.500h11v1H0z" fill="#9a9a9a"/></svg><span class="ml-2">行</span></h3>
                        <div class="h-[127px] bg-white"></div>
                    </div>
                    <div class="pl-[2px] pt-[6px]">
                        <h3 class="flex h-[21px] items-center pl-[5px] pb-1"><svg class="h-[10px] w-[10px]" viewBox="0 0 10 10"><path d="M9.500 2.500V.6H.8L5 5 .8 9.400h8.700V7.500" fill="none" stroke="#8a8a8a" stroke-width="1.200"/></svg><span class="ml-2">値</span></h3>
                        <div class="h-[127px] bg-white"></div>
                    </div>
                </div>

                <div class="mb-2 mt-5 flex items-center justify-between pl-[6px]">
                    <label class="flex items-center gap-[7px]"><input type="checkbox" class="h-[13px] w-[13px] appearance-none rounded-xs border border-[#6e6e6e] bg-white">レイアウトの更新を保留する</label>
                    <button disabled class="h-[25px] w-9 border border-[#dcdcdc] text-xs text-[#b4b4b4]">更新</button>
                </div>
            </aside>
        </div>

        <!-- status bar -->
        <footer class="flex h-[22px] shrink-0 items-center border-t border-[#c4c4c4] bg-[#f4f4f4] pl-3 pr-5">
            <span>準備完了</span>
            <svg class="ml-[19px] h-[13px] w-[14px]" viewBox="0 0 14 13" fill="none" stroke="#262626"><path d="M4 12.500H.5V.5h13V6M.5 3h13M2.500 5.500h3M2.500 8h2"/><circle cx="9.500" cy="8.500" r="4"/><circle cx="9.500" cy="8.500" r="1.500" fill="#262626"/></svg>
            <div class="ml-auto flex h-full items-center">
                <button class="flex h-full w-10 items-center justify-center bg-[#dedede]"><svg class="h-[13px] w-[13px]" viewBox="0 0 13 13"><path d="M.5.5h12v12H.5zM.5 4.500h12M.5 8.500h12M4.500.5v12M8.500.5v12" fill="none" stroke="#262626"/></svg></button>
                <button class="flex w-10 justify-center"><svg class="h-[13px] w-[14px]" viewBox="0 0 14 13"><path d="M.5.5h13v12H.5zM3.500 2.500h7v8h-7zM5 4.500h4M5 6.500h4M5 8.500h4" fill="none" stroke="#262626"/></svg></button>
                <button class="flex w-10 justify-center"><svg class="h-[13px] w-[14px]" viewBox="0 0 14 13"><path d="M.5.5h13v12H.5zM.5 8.500h8.500M9 .5v8M4.500.5v8" fill="none" stroke="#262626"/></svg></button>
                <button class="ml-[6px] h-px w-2 bg-[#262626]" aria-label="縮小"></button>
                <input type="range" value="50" aria-label="ズーム" class="mx-[5px] h-px w-[100px] appearance-none bg-[#606060] [&::-webkit-slider-thumb]:h-[11px] [&::-webkit-slider-thumb]:w-[5px] [&::-webkit-slider-thumb]:appearance-none [&::-webkit-slider-thumb]:bg-[#606060]">
                <button aria-label="拡大"><svg class="h-[9px] w-[9px]" viewBox="0 0 9 9"><path d="M4.500 0v9M0 4.500h9" stroke="#262626"/></svg></button>
                <span class="ml-3 w-[34px] text-right">100%</span>
            </div>
        </footer>
    </div>

    <script>
        const names = 'ABCDEFGHIJKLMNOPQRSTU'.split('');
        const cols = document.getElementById('cols');
        const rows = document.getElementById('rows');

        const width = (name) => name === 'A' ? 'w-[35px]' : name === 'B' ? 'w-[85px]' : 'w-[72px]';
        const headTone = (name) => name === 'A' ? 'bg-[#d2d2d2] text-[#1a7343]' : '';

        cols.innerHTML = '<th class="w-[34px] border-b border-r border-b-[#ababab] border-r-[#c8c8c8] p-0"><svg class="ml-auto mr-1 mt-1 h-4 w-4" viewBox="0 0 16 16"><path d="M16 0v16H0z" fill="#b4b4b4"/></svg></th>'
            + names.map(n => `<th class="${width(n)} ${headTone(n)} border-b border-r border-b-[#9a9a9a] border-r-[#c8c8c8] p-0 font-normal">${n}</th>`).join('')
            + '<th class="border-b border-[#9a9a9a] p-0"></th>';

        const values = { A1: '列1', B1: '(すべて)' };

        for (let r = 1; r <= 31; r++) {
            const tr = document.createElement('tr');
            tr.className = 'h-[25px]';
            const tone = r === 1 ? 'bg-[#d2d2d2] text-[#1a7343]' : '';
            tr.innerHTML = `<th class="${tone} border-b border-r border-b-[#c8c8c8] border-r-[#9a9a9a] p-0 pb-[2px] font-normal">${r}</th>`
                + names.map(n => {
                    const v = values[n + r] || '';
                    const fill = v ? 'bg-[#c0e6f5] border-b-[#44b3e1]' : 'bg-white border-b-[#dedede]';
                    return `<td class="${fill} border-b border-r border-r-[#dedede] p-0 pb-1 pl-[2px]">${v}</td>`;
                }).join('')
                + '<td class="border-b border-[#dedede] bg-white p-0"></td>';
            rows.appendChild(tr);
        }
    </script>
</body>
</html>
